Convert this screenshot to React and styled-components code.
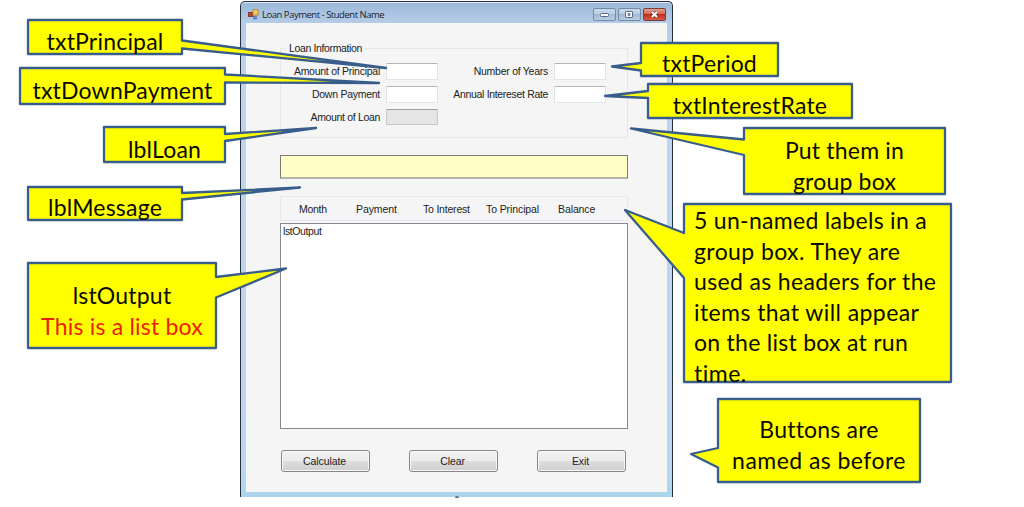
import React from 'react';
import styled, { createGlobalStyle } from 'styled-components';

const GlobalStyle = createGlobalStyle`
  * {
    box-sizing: border-box;
  }
  body {
    margin: 0;
    background: #ffffff;
    overflow: hidden;
  }
`;

const Slide = styled.div`
  position: relative;
  width: 1024px;
  height: 507px;
  padding: 1px 0 0 240px;
  background: #ffffff;
`;

const Window = styled.div`
  width: 433px;
  height: 496px;
  display: flex;
  flex-direction: column;
  border: 1px solid #26303a;
  border-bottom: none;
  border-radius: 5px 5px 0 0;
  padding: 0 5px 5px;
  background: linear-gradient(
    to bottom,
    #9cb8d8 0px,
    #b4cce7 21px,
    #bdd5ee 80px,
    #bbd6f0 470px,
    #a9d5ee 495px
  );
  box-shadow: inset 0 1px 0 #dfeaf5;
  font-family: 'Liberation Sans', Arial, sans-serif;
  font-size: 10.5px;
  color: #222222;
`;

const TitleBar = styled.div`
  height: 21px;
  flex: none;
  display: flex;
  align-items: center;
  padding: 4px 1px 0 2px;
`;

const Title = styled.div`
  flex: 1;
  padding-left: 3px;
  font-family: 'Open Sans', 'Noto Sans', sans-serif;
  font-size: 9.5px;
  line-height: 12px;
  letter-spacing: ${props => props.$tracking}px;
  color: #1b232e;
`;

const Controls = styled.div`
  display: flex;
  gap: 2px;
`;

const Control = styled.div`
  width: 23px;
  height: 13px;
  display: flex;
  align-items: center;
  justify-content: center;
  border: 1px solid ${props => (props.$close ? '#7a3a40' : '#7288a3')};
  border-radius: 2px;
  background: ${props =>
    props.$close
      ? 'linear-gradient(#e0a090, #cf6450 48%, #bb2f1d 50%, #d0604a)'
      : 'linear-gradient(#c9d9ea, #b9cde3 48%, #9fb8d3 50%, #b9cfe6)'};
`;

const Client = styled.div`
  flex: 1;
  display: flex;
  flex-direction: column;
  padding: 20px 39px 0 34px;
  background: #f5f5f5;
`;

const GroupBox = styled.div`
  width: 348px;
  height: 95px;
  flex: none;
`;

const Legend = styled.div`
  height: 11px;
  display: flex;
  align-items: center;
  gap: 3px;
  line-height: 11px;
  white-space: nowrap;
  letter-spacing: ${props => props.$tracking}px;
  &::before,
  &::after {
    content: '';
    height: 1px;
    background: #e3e7ec;
  }
  &::before {
    width: 6px;
  }
  &::after {
    flex: 1;
  }
`;

const GroupBody = styled.div`
  height: 90px;
  margin-top: -6px;
  padding-top: 15px;
  display: flex;
  border: 1px solid #e3e7ec;
  border-top: none;
`;

const Column = styled.div`
  width: ${props => props.$width}px;
  display: flex;
  flex-direction: column;
  gap: 6px;
`;

const Field = styled.div`
  height: 17px;
  display: flex;
  align-items: center;
  justify-content: flex-end;
  gap: 6px;
`;

const Label = styled.span`
  padding-bottom: 1px;
  white-space: nowrap;
  letter-spacing: ${props => props.$tracking || -0.26}px;
`;

const TextBox = styled.div`
  width: 52px;
  height: 17px;
  border: 1px solid #e0e3e8;
  border-top-color: #b4b7bd;
  background: #ffffff;
`;

const ReadOnly = styled(TextBox)`
  height: 16px;
  margin-bottom: 2px;
  border-color: #c6c6c6;
  border-top-color: #a0a0a0;
  background: #e5e5e5;
`;

const Message = styled.div`
  width: 348px;
  height: 24px;
  flex: none;
  margin-top: 17px;
  border: 1px solid #7b7b70;
  border-bottom: 2px solid #b4b4a4;
  background: #ffffc6;
`;

const HeaderBox = styled.div`
  width: 348px;
  height: 25px;
  flex: none;
  margin-top: 17px;
  padding-left: 18px;
  display: flex;
  align-items: center;
  border: 1px solid #e6eaee;
`;

const HeaderCell = styled.span`
  width: ${props => props.$width}px;
  white-space: nowrap;
  letter-spacing: ${props => props.$tracking || 0}px;
`;

const ListBox = styled.div`
  width: 348px;
  height: 206px;
  flex: none;
  margin-top: 2px;
  padding: 1px 2px;
  line-height: 12px;
  letter-spacing: -0.4px;
  border: 1px solid #858a92;
  background: #ffffff;
`;

const Buttons = styled.div`
  display: flex;
  gap: 39px;
  margin: 21px 0 0 1px;
`;

const Button = styled.div`
  width: 89px;
  height: 22px;
  flex: none;
  display: flex;
  align-items: center;
  justify-content: center;
  padding-right: 2px;
  letter-spacing: -0.1px;
  border: 1px solid #858585;
  border-radius: 3px;
  box-shadow: inset 0 0 0 1px #f8f8f8;
  background: linear-gradient(#f2f2f2, #ebebeb 48%, #dddddd 52%, #cfcfcf);
`;

// Annotations floating over the form
const Callout = styled.div`
  position: absolute;
  left: ${props => props.$x}px;
  top: ${props => props.$y}px;
  width: ${props => props.$w}px;
  height: ${props => props.$h}px;
`;

const Shape = styled.svg`
  position: absolute;
  left: 0;
  top: 0;
  overflow: visible;
`;

const Lines = styled.div`
  position: relative;
  display: flex;
  flex-direction: column;
  align-items: ${props => (props.$left ? 'flex-start' : 'center')};
  padding: ${props => props.$top}px 0 0 ${props => props.$left || 0}px;
  font-family: Lato, Carlito, sans-serif;
  font-size: 23px;
  font-variant-ligatures: none;
  line-height: 30.5px;
  color: #0a0a00;
`;

const Line = styled.span`
  white-space: nowrap;
  letter-spacing: ${props => props.$tracking || 0.2}px;
  color: ${props => props.$color || 'inherit'};
`;

const Resize = styled.div`
  position: absolute;
  left: 455px;
  top: 496px;
  width: 4px;
  height: 2px;
  border-radius: 2px 2px 0 0;
  background: #5f6f7c;
`;

const callouts = [
  { x: 28, y: 20, w: 154, h: 34, side: 'right', base: [20.5, 28.5], tip: [358, 48], top: 6,
    lines: [{ text: 'txtPrincipal' }] },
  { x: 20, y: 68, w: 205, h: 36, side: 'right', base: [6.5, 14.5], tip: [359, 15], top: 7,
    lines: [{ text: 'txtDownPayment' }] },
  { x: 104, y: 127, w: 121, h: 35, side: 'right', base: [7, 14], tip: [212, 1], top: 7,
    lines: [{ text: 'lblLoan' }] },
  { x: 28, y: 187, w: 154, h: 33, side: 'right', base: [6, 12.5], tip: [272, 0.5], top: 5,
    lines: [{ text: 'lblMessage' }] },
  { x: 28, y: 263, w: 188, h: 85, side: 'right', base: [14, 34.5], tip: [258, 5.5], top: 17,
    lines: [{ text: 'lstOutput' }, { text: 'This is a list box', color: '#ee1c00' }] },
  { x: 641, y: 43, w: 137, h: 33, side: 'left', base: [20, 27.5], tip: [-29, 23.5], top: 5,
    lines: [{ text: 'txtPeriod' }] },
  { x: 648, y: 84, w: 204, h: 34, side: 'left', base: [7, 14], tip: [-43, 12], top: 6,
    lines: [{ text: 'txtInterestRate' }] },
  { x: 744, y: 128, w: 201, h: 66, side: 'left', base: [11.5, 27], tip: [-113, 0.5], top: 7,
    lines: [{ text: 'Put them in' }, { text: 'group box' }] },
  { x: 684, y: 204, w: 267, h: 178, side: 'left', base: [29, 74], tip: [-59, 6], top: 1, left: 10,
    lines: [
      { text: '5 un-named labels in a', tracking: 0.3 },
      { text: 'group box. They are', tracking: 0.4 },
      { text: 'used as headers for the', tracking: 0.35 },
      { text: 'items that will appear', tracking: 0.42 },
      { text: 'on the list box at run', tracking: 0.27 },
      { text: 'time.', tracking: 0.5 },
    ] },
  { x: 718, y: 399, w: 202, h: 83, side: 'left', base: [49, 68.5], tip: [-27, 55], top: 15,
    lines: [{ text: 'Buttons are' }, { text: 'named as before', tracking: 0.45 }] },
];

const outline = ({ w, h, side, base, tip }) => {
  const [a, b] = base;
  if (side === 'right') {
    return `M0 0H${w}V${a}L${tip[0]} ${tip[1]}L${w} ${b}V${h}H0Z`;
  }
  return `M0 0H${w}V${h}H0V${b}L${tip[0]} ${tip[1]}L0 ${a}Z`;
};

const Note = ({ note }) => (
  <Callout $x={note.x} $y={note.y} $w={note.w} $h={note.h}>
    <Shape width={note.w} height={note.h}>
      <path
        d={outline(note)}
        fill='#ffff00'
        stroke='#385d8a'
        strokeWidth='2.3'
        strokeLinejoin='round'
      />
    </Shape>
    <Lines $top={note.top} $left={note.left}>
      {note.lines.map(line => (
        <Line key={line.text} $tracking={line.tracking} $color={line.color}>
          {line.text}
        </Line>
      ))}
    </Lines>
  </Callout>
);

const FormIcon = () => (
  <svg width='11' height='11' viewBox='0 0 11 11'>
    <rect x='0.5' y='3.5' width='4' height='4' fill='#c8402c' stroke='#8c3a36' />
    <rect x='5' y='0.7' width='5' height='5.4' fill='#f6cf52' stroke='#a88a44' />
    <rect x='5.5' y='7.5' width='3' height='2.5' fill='#5b8ad6' stroke='#4a6ea8' strokeWidth='0.6' />
  </svg>
);

const App = () => (
  <>
    <GlobalStyle />
    <Slide>
      <Window>
        <TitleBar>
          <FormIcon />
          <Title $tracking={-0.48}>Loan Payment - Student Name</Title>
          <Controls>
            <Control>
              <svg width='9' height='5' viewBox='0 0 9 5'>
                <rect x='0.5' y='1.5' width='8' height='3' rx='0.8' fill='#fff' stroke='#5c6b7f' />
              </svg>
            </Control>
            <Control>
              <svg width='9' height='7' viewBox='0 0 9 7'>
                <rect x='0.5' y='0.5' width='7' height='6' rx='0.5' fill='#fff' stroke='#5c6b7f' />
                <rect x='3' y='2.5' width='2' height='2' fill='#8fa6c0' stroke='#5c6b7f' strokeWidth='0.7' />
              </svg>
            </Control>
            <Control $close>
              <svg width='9' height='7' viewBox='0 0 9 7'>
                <path d='M2 1L7 6M7 1L2 6' stroke='#6a4448' strokeWidth='3.2' />
                <path d='M2 1L7 6M7 1L2 6' stroke='#fff' strokeWidth='1.8' />
              </svg>
            </Control>
          </Controls>
        </TitleBar>
        <Client>
          <GroupBox>
            <Legend $tracking={-0.36}>Loan Information</Legend>
            <GroupBody>
              <Column $width={157}>
                <Field>
                  <Label>Amount of Principal</Label>
                  <TextBox />
                </Field>
                <Field>
                  <Label>Down Payment</Label>
                  <TextBox />
                </Field>
                <Field>
                  <Label $tracking={-0.33}>Amount of Loan</Label>
                  <ReadOnly />
                </Field>
              </Column>
              <Column $width={168}>
                <Field>
                  <Label>Number of Years</Label>
                  <TextBox />
                </Field>
                <Field>
                  <Label $tracking={-0.33}>Annual Intereset Rate</Label>
                  <TextBox />
                </Field>
              </Column>
            </GroupBody>
          </GroupBox>
          <Message />
          <HeaderBox>
            <HeaderCell $width={57} $tracking={-0.3}>Month</HeaderCell>
            <HeaderCell $width={67} $tracking={-0.1}>Payment</HeaderCell>
            <HeaderCell $width={63} $tracking={-0.2}>To Interest</HeaderCell>
            <HeaderCell $width={72} $tracking={-0.1}>To Principal</HeaderCell>
            <HeaderCell $width={50} $tracking={-0.1}>Balance</HeaderCell>
          </HeaderBox>
          <ListBox>lstOutput</ListBox>
          <Buttons>
            <Button>Calculate</Button>
            <Button>Clear</Button>
            <Button>Exit</Button>
          </Buttons>
        </Client>
      </Window>
      <Resize />
      {callouts.map(note => (
        <Note key={note.lines[0].text} note={note} />
      ))}
    </Slide>
  </>
);

export default App;
